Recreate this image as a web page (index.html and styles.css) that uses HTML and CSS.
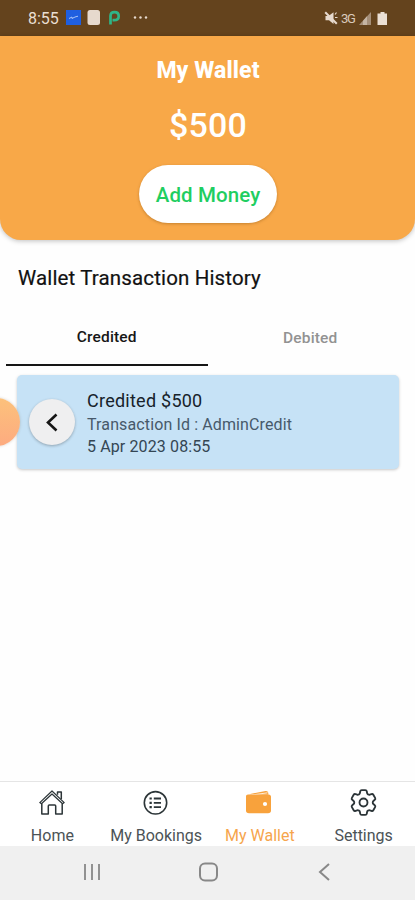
FILE: index.html
```html
<!DOCTYPE html>
<html lang="en">
<head>
<meta charset="utf-8">
<title>My Wallet</title>
<link rel="stylesheet" href="styles.css">
</head>
<body>
<div class="screen">
  <div class="status">
    <span class="time">8:55</span>
    <svg class="notes" width="86" height="20" viewBox="0 0 86 20">
      <rect x="1" y="2" width="15" height="15" fill="#1f5fe0"/>
      <path d="M4 10.500l3-1.500v1.500l3-1.500 3-.8" fill="none" stroke="#a9c4f6" stroke-width="1"/>
      <rect x="22.500" y="2" width="12.500" height="15" rx="2.500" fill="#e6d9cd"/>
      <path d="M45.500 16.500V8Q45.500 4.200 49.500 4.200C52.500 4.200 53.700 6 53.700 8.200S52 12.200 49 12.200H47.500" fill="none" stroke="#2fb587" stroke-width="2.700"/>
      <g fill="#e6d9cd"><circle cx="70" cy="9.500" r="1.200"/><circle cx="75.500" cy="9.500" r="1.200"/><circle cx="81" cy="9.500" r="1.200"/></g>
    </svg>
    <span class="more"></span>
    <svg class="mute" width="14" height="14" viewBox="0 0 14 14">
      <path d="M1.500 5H4.500L9.500 1.200V13L5 9.300H1.500Z" fill="#e6d9cd"/>
      <path d="M1.200 1.200L12.800 12.800" stroke="#e6d9cd" stroke-width="2"/>
      <path d="M11 3.500L12.500 1.500M11 6.500H13.500" fill="none" stroke="#e6d9cd" stroke-width="1.200"/>
    </svg>
    <span class="net">3G</span>
    <svg class="levels" width="30" height="15" viewBox="0 0 30 15">
      <path d="M0 14L12 1V14Z" fill="#a58f79"/>
      <path d="M4 9.700L8 5.300V14H4Z" fill="#c5b5a4"/>
      <path d="M19 2.500h2.500V1h4v1.500H28V14H18.500V2.500Z" fill="#ebe0d4"/>
    </svg>
  </div>

  <header class="hero">
    <h1>My Wallet</h1>
    <div class="amount">$500</div>
    <button class="add"><span>Add Money</span></button>
  </header>

  <main>
    <h2>Wallet Transaction History</h2>
    <div class="tabs">
      <div class="tab active">Credited</div>
      <div class="tab">Debited</div>
    </div>
    <div class="card">
      <div class="back">
        <svg width="46" height="46" viewBox="0 0 46 46"><path d="M27.500 15.500L19 23.500L27.500 31.500" fill="none" stroke="#151515" stroke-width="2.600"/></svg>
      </div>
      <div class="info">
        <div class="title">Credited $500</div>
        <div class="line txn">Transaction Id : AdminCredit</div>
        <div class="line date">5 Apr 2023 08:55</div>
      </div>
      <span class="bubble"></span>
    </div>
  </main>

  <nav class="bottom">
    <div class="item">
      <svg width="26" height="26" viewBox="0 0 26 26" fill="none" stroke="#2c3538" stroke-width="1.500" stroke-linejoin="round">
        <path d="M.8 12.600L13 1L25.200 12.600L23.600 13.800L13 4L2.400 13.800Z" stroke-width="1.200"/>
        <path d="M18.500 4.800V2H22.300V9"/>
        <path d="M2.800 13.400V24H9.300V16Q9.300 15 10.300 15H15.700Q16.700 15 16.700 16V24H23.200V13.400"/>
      </svg>
      <span>Home</span>
    </div>
    <div class="item bookings">
      <svg width="26" height="26" viewBox="0 0 26 26" fill="none" stroke="#2c3538">
        <circle cx="12.500" cy="12.800" r="11.200" stroke-width="1.600"/>
        <path d="M6.500 8.500H8.800M6.500 12.800H8.800M6.500 17.100H8.800" stroke-width="2.200"/>
        <path d="M10.800 8.500H18M10.800 12.800H18M10.800 17.100H18" stroke-width="1.800"/>
      </svg>
      <span>My Bookings</span>
    </div>
    <div class="item wallet">
      <svg width="26" height="26" viewBox="0 0 26 26">
        <path d="M3 4.200L19.500 1Q22 .6 22.300 3.100V4.700Z" fill="#f8a23c"/>
        <path d="M6 5L21.500 2.800" stroke="#fff" stroke-width=".8"/>
        <path d="M2 4.500H22.500Q25 4.500 25 7V20.500Q25 23.300 22 23.300H3Q0 23.300 0 20.500V6Q0 4.500 2 4.500Z" fill="#f8a23c"/>
        <circle cx="19" cy="14" r="2.100" fill="#fff"/>
      </svg>
      <span>My Wallet</span>
    </div>
    <div class="item settings">
      <svg width="33" height="33" viewBox="0 0 24 24" fill="none" stroke="#2c3538" stroke-width="1.350" stroke-linejoin="round">
        <path d="M9.594 3.940c.09-.542.56-.94 1.110-.94h2.593c.55 0 1.020.398 1.110.94l.213 1.281c.063.374.313.686.645.87.074.04.147.083.22.127.325.196.72.257 1.075.124l1.217-.456a1.125 1.125 0 0 1 1.370.49l1.296 2.247a1.125 1.125 0 0 1-.26 1.431l-1.003.827c-.293.241-.438.613-.43.992a7.723 7.723 0 0 1 0 .255c-.008.378.137.75.43.991l1.004.827c.424.35.534.955.26 1.430l-1.298 2.247a1.125 1.125 0 0 1-1.369.491l-1.217-.456c-.355-.133-.75-.072-1.076.124a6.470 6.470 0 0 1-.22.128c-.331.183-.581.495-.644.869l-.213 1.281c-.09.543-.56.94-1.110.94h-2.594c-.55 0-1.019-.398-1.110-.94l-.213-1.281c-.062-.374-.312-.686-.644-.87a6.520 6.520 0 0 1-.22-.127c-.325-.196-.72-.257-1.076-.124l-1.217.456a1.125 1.125 0 0 1-1.369-.49l-1.297-2.247a1.125 1.125 0 0 1 .26-1.431l1.004-.827c.292-.24.437-.613.43-.991a6.932 6.932 0 0 1 0-.255c.007-.38-.138-.751-.43-.992l-1.004-.827a1.125 1.125 0 0 1-.26-1.430l1.297-2.247a1.125 1.125 0 0 1 1.370-.491l1.216.456c.356.133.751.072 1.076-.124.072-.044.146-.086.22-.128.332-.183.582-.495.644-.869l.214-1.280Z"/>
        <circle cx="12" cy="12" r="2.900"/>
      </svg>
      <span>Settings</span>
    </div>
  </nav>

  <div class="system">
    <svg width="20" height="20" viewBox="0 0 20 20" stroke="#929292" stroke-width="2"><path d="M3 2V18M10 2V18M17 2V18"/></svg>
    <svg width="20" height="20" viewBox="0 0 20 20" fill="none" stroke="#888" stroke-width="2"><rect x="1" y="1.500" width="17" height="17" rx="5"/></svg>
    <svg width="20" height="20" viewBox="0 0 20 20" fill="none" stroke="#888" stroke-width="2"><path d="M14 2L5 10L14 18"/></svg>
  </div>
</div>
</body>
</html>
```
FILE: styles.css
```css
* { box-sizing: border-box; }
body { margin: 0; background: #fefefe; font-family: Roboto, sans-serif; color: #111; }
.screen { width: 415px; height: 900px; display: flex; flex-direction: column; overflow: hidden; }
svg { display: block; flex: none; }
h1, h2 { margin: 0; }

.status { height: 36px; flex: none; background: #64431d; display: flex; align-items: center; padding: 0 26px 0 28px; color: #eadfd3; }
.time { width: 37px; font-size: 16px; white-space: nowrap; padding-top: 1px; }
.more { flex: 1; }
.mute { margin-right: 3px; }
.net { width: 18px; font-size: 13px; letter-spacing: -1.2px; color: #d9cabb; padding-top: 1px; }

.hero { height: 204px; flex: none; background: #f8a848; border-radius: 0 0 21px 21px; box-shadow: 0 1px 5px rgba(0,0,0,.25); display: flex; flex-direction: column; align-items: center; color: #fff; }
.hero h1 { margin-top: 21px; line-height: 28px; font-size: 23px; font-weight: 800; letter-spacing: .1px; padding-left: 1px; }
.amount { margin-top: 18px; line-height: 44px; font-size: 34px; font-weight: 500; letter-spacing: .2px; padding-left: 1px; }
.add { margin-top: 18px; width: 138px; height: 58px; padding: 2px 0 0 1px; border: 0; border-radius: 29px; background: #fff; box-shadow: 0 1px 3px rgba(110,60,0,.35); color: #1fce61; font: 500 20.500px Roboto, sans-serif; letter-spacing: .1px; }

main { flex: 1; }
h2 { margin: 25px 0 0 18px; line-height: 27px; font-size: 20.500px; font-weight: 400; letter-spacing: .14px; -webkit-text-stroke: .2px; }
.tabs { margin: 17px 6px 0; height: 57px; display: flex; }
.tab { width: 202px; text-align: center; line-height: 58px; font-size: 15.500px; font-weight: 500; letter-spacing: .15px; color: #929292; }
.tab:last-child { padding-left: 4px; }
.tab.active { line-height: 56px; color: #161616; border-bottom: 2px solid #161616; }
.card { position: relative; margin: 9px 16px 0 17px; height: 94px; background: #c6e2f6; border-radius: 5px; box-shadow: 0 1px 3px rgba(0,0,0,.22); display: flex; padding: 14px 0 0 12px; }
.back { margin-top: 10px; width: 46px; height: 46px; border-radius: 50%; background: #efeff0; box-shadow: 0 1px 3px rgba(0,0,0,.28); }
.info { margin-left: 12px; white-space: nowrap; }
.title { line-height: 24px; margin-bottom: 1px; font-size: 18px; letter-spacing: .25px; color: #17222b; }
.line { line-height: 22px; font-size: 16px; letter-spacing: .12px; color: #47596a; }
.date { color: #344654; }
.bubble { position: absolute; left: -45px; top: 23px; width: 48px; height: 48px; border-radius: 50%; background: linear-gradient(#fcc17b, #fdab80); box-shadow: 0 0 3px rgba(120,90,60,.3); }

.bottom { height: 65px; flex: none; border-top: 1px solid #e5e5e5; display: grid; grid-template-columns: repeat(4, 1fr); background: #fff; }
.item { display: flex; flex-direction: column; align-items: center; padding-top: 8px; font-size: 16px; color: #4c5356; white-space: nowrap; }
.item span { line-height: 20px; margin-top: 10px; padding-left: 1px; }
.item.wallet { color: #f6a54c; }
.item.settings svg { margin: -4px 0 -3px; }
.system { height: 54px; flex: none; background: #f0f0f0; display: flex; align-items: center; justify-content: space-between; padding: 0 80px 2px 82px; }
```
